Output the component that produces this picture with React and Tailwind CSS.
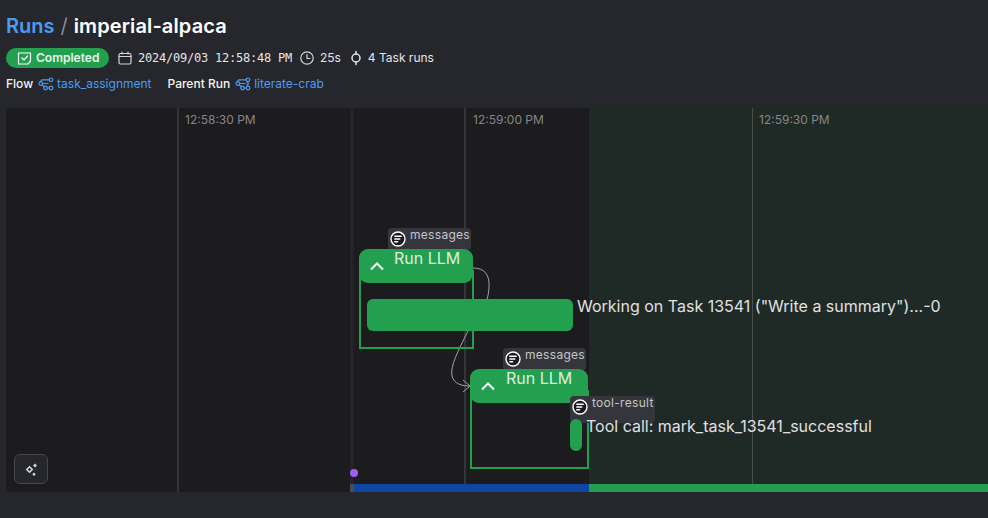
import React from "react";

const FlowIcon = ({ arrows }) => (
  <svg width="16" height="14" viewBox="0 0 16 14" fill="none" stroke="#4b9cf0" strokeWidth="1.2" strokeLinecap="round" strokeLinejoin="round">
    <circle cx="2.800" cy="6.500" r="1.800" />
    <circle cx="13" cy="2.800" r="1.800" />
    <circle cx="13" cy="11" r="1.800" />
    <circle cx="7.500" cy="11" r="1.800" />
    <path d="M2.800 4.700V4.200C2.800 3.300 3.500 2.800 4.300 2.800H11.200" />
    <path d="M4.100 7.800L6.200 9.800" />
    <path d="M9.300 11h1.900" />
    <path d="M4.600 6.500H10" />
    {arrows && <path d="M12 5l1.500 1.500L12 8" />}
  </svg>
);

const ArtifactIcon = () => (
  <svg width="16" height="16" viewBox="0 0 16 16" fill="#1c1c1f" stroke="#fff" strokeWidth="1.4" strokeLinecap="round">
    <circle cx="8" cy="8" r="7" />
    <path d="M4.800 5.200h6.400M4.800 8h5M4.800 10.800h2.800" fill="none" />
  </svg>
);

const Tag = ({ label, className }) => (
  <div className={`absolute flex items-start rounded-sm bg-[#35363c] ${className}`}>
    <div className="ml-[2px] mt-[3px] shrink-0">
      <ArtifactIcon />
    </div>
    <span className="ml-[4px] mt-[-2px] text-[12px] leading-[18px] tracking-[0.3px] text-[#c4c5c9]">{label}</span>
  </div>
);

const RunNode = ({ className, textClassName }) => (
  <div className={`absolute h-[34px] rounded-[9px] bg-[#22a04f] ${className}`}>
    <svg className="absolute left-[10px] top-[12px]" width="16" height="10" viewBox="0 0 16 10" fill="none" stroke="#fff" strokeWidth="2">
      <path d="M2 8.500L8 2.500L14 8.500" />
    </svg>
    <span className={`absolute top-[-3px] text-[16px] leading-[24px] text-[#d9f0e0] ${textClassName}`}>Run LLM</span>
  </div>
);

const TimeLabel = ({ children, className }) => (
  <span className={`absolute top-[4px] whitespace-nowrap text-[12px] leading-[16px] text-[#85868a] ${className}`}>{children}</span>
);

export default function App() {
  return (
    <div className="flex h-[518px] w-[988px] flex-col overflow-hidden bg-[#26272c] font-['Inter',sans-serif] text-[#f3f4f6]">
      <div className="flex flex-col px-[6px] pt-[12px]">
        <h1 className="text-[20px] font-semibold leading-[28px]">
          <span className="text-[#4b9cf0]">Runs</span>
          <span className="mx-[6px] font-normal text-[#8a8b90]">/</span>
          <span className="tracking-[0.13px] text-white">imperial-alpaca</span>
        </h1>

        <div className="mt-[8px] flex h-[20px] items-center text-[12px]">
          <div className="flex h-[20px] w-[103px] items-center rounded-full bg-[#22a04f] pl-[11px] font-semibold text-[#e8f6ec]">
            <svg width="15" height="13" viewBox="0 0 15 13" fill="none" stroke="#fff" strokeWidth="1.2" strokeLinecap="round" strokeLinejoin="round">
              <path d="M1.500 1h12v8l-2.500 3h-9.500z" />
              <path d="M5 6l2 2 3.500-4" />
            </svg>
            <span className="ml-[4px]">Completed</span>
          </div>
          <svg className="ml-[9px]" width="14" height="14" viewBox="0 0 14 14" fill="none" stroke="#d4d4d8" strokeWidth="1.2" strokeLinecap="round">
            <rect x="1" y="2.500" width="12" height="10.500" rx="1.500" />
            <path d="M1 5.500h12M4 1v2M10 1v2" />
          </svg>
          <span className="ml-[6px] font-['DejaVu_Sans_Mono',monospace] text-[12px] tracking-[-0.23px] text-[#e4e4e7]">2024/09/03 12:58:48 PM</span>
          <svg className="ml-[8px]" width="14" height="14" viewBox="0 0 14 14" fill="none" stroke="#d4d4d8" strokeWidth="1.2" strokeLinecap="round">
            <circle cx="7" cy="7" r="6.200" />
            <path d="M7 3.500V7.500H10" />
          </svg>
          <span className="ml-[6px] text-[#e4e4e7]">25s</span>
          <svg className="ml-[9px]" width="12" height="16" viewBox="0 0 12 16" fill="none" stroke="#e4e4e7" strokeWidth="1.500" strokeLinecap="round">
            <circle cx="6" cy="8" r="4" />
            <path d="M6 1.500V4M6 12v2.500" />
          </svg>
          <span className="ml-[6px] text-[#e4e4e7]">4 Task runs</span>
        </div>

        <div className="mt-[6px] flex h-[20px] items-center text-[12px] font-medium">
          <span className="text-[#f3f4f6]">Flow</span>
          <span className="ml-[5px]"><FlowIcon /></span>
          <span className="ml-[3px] font-normal text-[#4b9cf0]">task_assignment</span>
          <span className="ml-[16px] text-[#f3f4f6]">Parent Run</span>
          <span className="ml-[5px]"><FlowIcon arrows /></span>
          <span className="ml-[3px] font-normal text-[#4b9cf0]">literate-crab</span>
        </div>
      </div>

      {/* Timeline graph, items sit at their place on the canvas */}
      <div className="relative ml-[6px] mt-[14px] h-[384px] shrink-0 overflow-hidden rounded-l-[4px] bg-[#1c1c1f]">
        <div className="absolute bottom-0 left-[583px] right-0 top-0 bg-[#1f2a26]" />
        <div className="absolute bottom-0 left-[344px] top-0 w-[4px] bg-[#232327]" />

        <div className="absolute bottom-0 left-[171px] top-0 w-[2px] bg-[#34353a]" />
        <div className="absolute bottom-0 left-[458px] top-0 w-[2px] bg-[#34353a]" />
        <div className="absolute bottom-0 left-[746px] top-0 w-[1px] bg-[#4a4f4d]" />
        <TimeLabel className="left-[179px]">12:58:30 PM</TimeLabel>
        <TimeLabel className="left-[467px]">12:59:00 PM</TimeLabel>
        <TimeLabel className="left-[753px]">12:59:30 PM</TimeLabel>

        <svg className="absolute left-0 top-0" width="982" height="384" fill="none" stroke="#a1a1aa" strokeWidth="1">
          <path d="M467 160C478 160 484 166 483 180C482 196 474 212 462 223C452 243 444 258 446 268C448 276 456 278 464 278" />
          <path d="M457 272L464 278L457 284" />
        </svg>

        {/* first run group */}
        <Tag label="messages" className="left-[382px] top-[120px] h-[22px] w-[83px]" />
        <div className="absolute left-[353px] top-[162px] h-[79px] w-[115px] border-2 border-[#22a04f]" />
        <RunNode className="left-[353px] top-[141px] w-[114px]" textClassName="left-[35px]" />
        <div className="absolute left-[361px] top-[191px] h-[32px] w-[206px] rounded-[6px] bg-[#22a04f]" />
        <span className="absolute left-[571px] top-[186px] whitespace-nowrap text-[16px] leading-[24px] text-[#e0e0e2]">Working on Task 13541 ("Write a summary")...-0</span>

        {/* second run group */}
        <Tag label="messages" className="left-[497px] top-[240px] h-[23px] w-[83px]" />
        <div className="absolute left-[464px] top-[282px] h-[79px] w-[119px] border-2 border-[#22a04f]" />
        <RunNode className="left-[464px] top-[261px] w-[118px]" textClassName="left-[36px]" />
        <Tag label="tool-result" className="left-[564px] top-[288px] h-[27px] w-[85px]" />
        <div className="absolute left-[564px] top-[311px] h-[32px] w-[12px] rounded-full bg-[#22a04f]" />
        <span className="absolute left-[580px] top-[306px] whitespace-nowrap text-[16px] leading-[24px] text-[#e0e0e2]">Tool call: mark_task_13541_successful</span>

        <div className="absolute left-[344px] top-[361px] h-[8px] w-[8px] rounded-full bg-[#a25cf2]" />

        <div className="absolute bottom-0 left-[344px] right-0 flex h-[8px]">
          <div className="w-[4px] bg-[#4d4a5c]" />
          <div className="w-[235px] bg-[#0d47a1]" />
          <div className="flex-1 bg-[#22a04f]" />
        </div>

        <button className="absolute left-[8px] top-[346px] flex h-[30px] w-[34px] items-center justify-center rounded-[6px] border border-[#46474c] bg-[#26272c]">
          <svg width="15" height="15" viewBox="0 0 15 15" fill="#d4d4d8">
            <path d="M5.500 4.800L8.200 7.500L5.500 10.200L2.800 7.500z" fill="none" stroke="#d4d4d8" strokeWidth="1.600" />
            <path d="M11 1.500L13 3.500L11 5.500L9 3.500z" />
            <path d="M10 10.500L11.700 12.200L10 13.900L8.300 12.200z" />
          </svg>
        </button>
      </div>
    </div>
  );
}
